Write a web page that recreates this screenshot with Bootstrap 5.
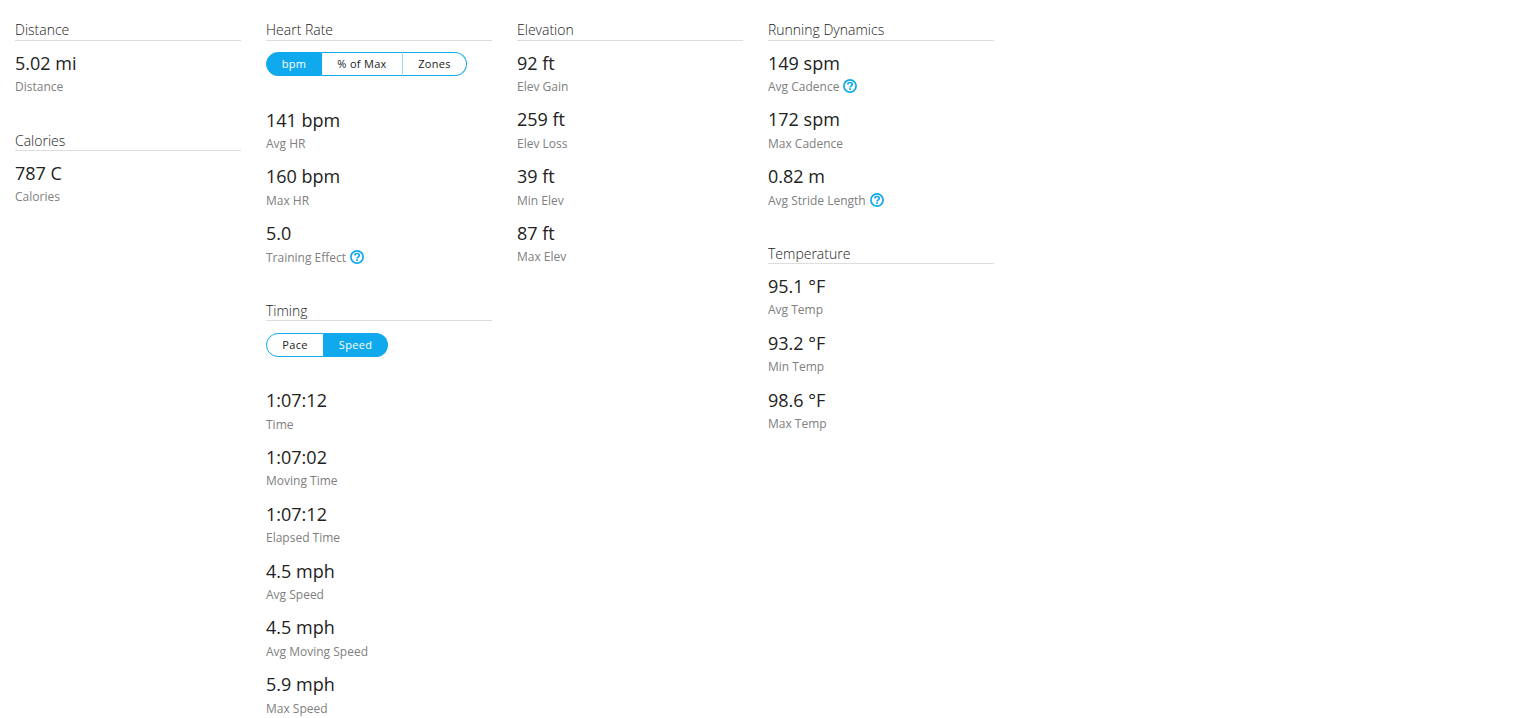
<!DOCTYPE html>
<html lang="en">
<head>
<meta charset="utf-8">
<title>Activity stats</title>
<link href="https://cdn.jsdelivr.net/npm/bootstrap@5.3.0/dist/css/bootstrap.min.css" rel="stylesheet">
<style>
html,body{height:718px;overflow:hidden;background:#fff}
body{font-family:"Open Sans",sans-serif;color:#222}
.stats-page{padding:20px 15px 0;gap:25px;width:1004px}
.stats-col{width:226px;flex:none}
.sec{margin-bottom:23.4px}
.sec-title{font-size:14px;font-weight:300;line-height:20.6px;height:21px;border-bottom:1px solid #ddd;color:#222;margin:0 0 8.6px}
.sec+.sec .sec-title{line-height:22px}
.stat{height:56.8px}
.stat-solo{height:57px}
.stat-val{font-size:18px;line-height:26px;color:#222}
.stat-lab{font-size:12px;line-height:17px;margin-top:2.4px;color:#808080;display:flex;align-items:center;gap:4px}
.stat-lab svg{display:block}
.unit-group.btn-group{height:24px;margin:1.4px 0 0;display:inline-flex}
.unit-wrap-b .unit-group.btn-group{margin-top:1.7px}
.unit-group.btn-group>.btn{font-size:11px;line-height:22px;padding:0;height:24px;flex:none;color:#222;border:1px solid #11a9ed;border-radius:0;background:#fff;letter-spacing:.3px;margin:0}
.unit-group.btn-group>.btn.sel{background:#11a9ed;color:#fff}
.unit-group.btn-group>.btn+.btn{border-left:0;margin-left:0}
.unit-group.btn-group>.btn:first-child{border-radius:12px 0 0 12px}
.unit-group.btn-group>.btn:last-child{border-radius:0 12px 12px 0}
.unit-group.btn-group>.btn.mid{border-right:0}
.unit-group.btn-group>.btn.sep{border-left:1px solid #9adcf8}
.w56{width:56px}.w80{width:80px}.w65{width:65px}.w58{width:58px}.w64{width:64px}
.unit-wrap{height:57px}
.unit-wrap-b{height:57.2px}
</style>
</head>
<body>
<svg width="0" height="0" class="d-none"><defs>
<symbol id="qmark" viewBox="0 0 14 14"><circle cx="7" cy="7" r="6.1" fill="none" stroke="#11a9ed" stroke-width="1.7"/><path d="M4.8 5.6c0-1.4 1-2.1 2.2-2.1s2.2.8 2.2 2c0 1.7-2.2 1.5-2.2 3.1" fill="none" stroke="#11a9ed" stroke-width="1.7"/><rect x="6.1" y="9.3" width="1.8" height="1.7" fill="#11a9ed"/></symbol>
</defs></svg>
<div class="d-flex align-items-start stats-page">
  <div class="stats-col">
    <section class="sec">
      <h2 class="sec-title">Distance</h2>
      <div class="stat stat-solo"><div class="stat-val">5.02 mi</div><div class="stat-lab">Distance</div></div>
    </section>
    <section class="sec">
      <h2 class="sec-title">Calories</h2>
      <div class="stat"><div class="stat-val">787 C</div><div class="stat-lab">Calories</div></div>
    </section>
  </div>
  <div class="stats-col">
    <section class="sec">
      <h2 class="sec-title">Heart Rate</h2>
      <div class="unit-wrap"><div class="btn-group unit-group" role="group"><button class="btn sel w56">bpm</button><button class="btn mid w80">% of Max</button><button class="btn sep w65">Zones</button></div></div>
      <div class="stat"><div class="stat-val">141 bpm</div><div class="stat-lab">Avg HR</div></div>
      <div class="stat"><div class="stat-val">160 bpm</div><div class="stat-lab">Max HR</div></div>
      <div class="stat"><div class="stat-val">5.0</div><div class="stat-lab">Training Effect <svg width="14" height="14"><use href="#qmark"/></svg></div></div>
    </section>
    <section class="sec">
      <h2 class="sec-title">Timing</h2>
      <div class="unit-wrap-b"><div class="btn-group unit-group" role="group"><button class="btn w58">Pace</button><button class="btn sel w64">Speed</button></div></div>
      <div class="stat"><div class="stat-val">1:07:12</div><div class="stat-lab">Time</div></div>
      <div class="stat"><div class="stat-val">1:07:02</div><div class="stat-lab">Moving Time</div></div>
      <div class="stat"><div class="stat-val">1:07:12</div><div class="stat-lab">Elapsed Time</div></div>
      <div class="stat"><div class="stat-val">4.5 mph</div><div class="stat-lab">Avg Speed</div></div>
      <div class="stat"><div class="stat-val">4.5 mph</div><div class="stat-lab">Avg Moving Speed</div></div>
      <div class="stat"><div class="stat-val">5.9 mph</div><div class="stat-lab">Max Speed</div></div>
    </section>
  </div>
  <div class="stats-col">
    <section class="sec">
      <h2 class="sec-title">Elevation</h2>
      <div class="stat"><div class="stat-val">92 ft</div><div class="stat-lab">Elev Gain</div></div>
      <div class="stat"><div class="stat-val">259 ft</div><div class="stat-lab">Elev Loss</div></div>
      <div class="stat"><div class="stat-val">39 ft</div><div class="stat-lab">Min Elev</div></div>
      <div class="stat"><div class="stat-val">87 ft</div><div class="stat-lab">Max Elev</div></div>
    </section>
  </div>
  <div class="stats-col">
    <section class="sec">
      <h2 class="sec-title">Running Dynamics</h2>
      <div class="stat"><div class="stat-val">149 spm</div><div class="stat-lab">Avg Cadence <svg width="14" height="14"><use href="#qmark"/></svg></div></div>
      <div class="stat"><div class="stat-val">172 spm</div><div class="stat-lab">Max Cadence</div></div>
      <div class="stat"><div class="stat-val">0.82 m</div><div class="stat-lab">Avg Stride Length <svg width="14" height="14"><use href="#qmark"/></svg></div></div>
    </section>
    <section class="sec">
      <h2 class="sec-title">Temperature</h2>
      <div class="stat"><div class="stat-val">95.1 °F</div><div class="stat-lab">Avg Temp</div></div>
      <div class="stat"><div class="stat-val">93.2 °F</div><div class="stat-lab">Min Temp</div></div>
      <div class="stat"><div class="stat-val">98.6 °F</div><div class="stat-lab">Max Temp</div></div>
    </section>
  </div>
</div>
<script src="https://cdn.jsdelivr.net/npm/bootstrap@5.3.0/dist/js/bootstrap.bundle.min.js"></script>
</body>
</html>
